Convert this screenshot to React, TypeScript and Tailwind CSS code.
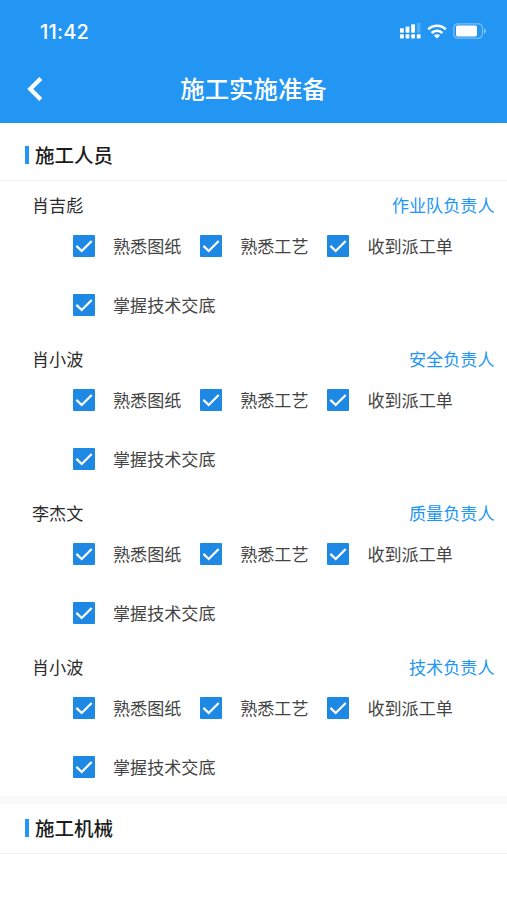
import { useState } from 'react'

type Worker = { name: string; role: string }

const WORKERS: Worker[] = [
  { name: '肖吉彪', role: '作业队负责人' },
  { name: '肖小波', role: '安全负责人' },
  { name: '李杰文', role: '质量负责人' },
  { name: '肖小波', role: '技术负责人' },
]

const CHECKS = ['熟悉图纸', '熟悉工艺', '收到派工单', '掌握技术交底']

function StatusBar() {
  return (
    <div className="flex h-[62px] items-center justify-between pl-10 pr-5">
      <span className="pt-px font-['Inter','Liberation_Sans',sans-serif] text-[20px] font-medium tracking-[0.2px]">11:42</span>
      <div className="flex items-center">
        {/* 双卡信号 */}
        <svg width="21" height="16" viewBox="0 0 21 16" fill="currentColor">
          <rect x="0" y="5.3" width="3.8" height="4.4" rx="0.8" />
          <rect x="5.6" y="3.6" width="3.8" height="6.1" rx="0.8" />
          <rect x="11.2" y="1.2" width="3.8" height="8.5" rx="0.8" />
          <rect x="16.8" y="0" width="3.8" height="9.7" rx="0.8" opacity="0.22" />
          <rect x="0" y="11.2" width="3.8" height="4.4" rx="0.8" />
          <rect x="5.6" y="11.2" width="3.8" height="4.4" rx="0.8" />
          <rect x="11.2" y="11.2" width="3.8" height="4.4" rx="0.8" />
          <rect x="16.8" y="11.2" width="3.8" height="4.4" rx="0.8" />
        </svg>
        <svg className="ml-[6px]" width="20" height="15" viewBox="0 0 20 15" fill="none" stroke="currentColor" strokeWidth="2.6">
          <path d="M1.2 5.4C6 0.5 14 0.5 18.8 5.4" />
          <path d="M4.6 9C7.6 6 12.4 6 15.4 9" />
          <path d="M10 14.4L6.9 11.4C8.6 9.9 11.4 9.9 13.1 11.4Z" fill="currentColor" stroke="none" />
        </svg>
        <svg className="ml-[6px]" width="34" height="16" viewBox="0 0 34 16">
          <rect x="0.8" y="0.8" width="28.6" height="14.4" rx="4" fill="none" stroke="currentColor" strokeWidth="1.2" opacity="0.4" />
          <rect x="3" y="2.6" width="21" height="10.8" rx="1.6" fill="currentColor" />
          <path d="M31 5.4C33.4 6.2 33.4 9.8 31 10.6Z" fill="currentColor" opacity="0.5" />
        </svg>
      </div>
    </div>
  )
}

function SectionTitle({ title }: { title: string }) {
  return (
    <div className="flex h-[50px] items-center border-b border-[#f2f2f2] bg-white pb-[2px] pl-[25px]">
      <span className="h-[18px] w-1 bg-[#2196f3]" />
      <h2 className="ml-[6px] text-[19.5px] font-medium leading-none text-[#1c1c1c]">{title}</h2>
    </div>
  )
}

function CheckItem({ label }: { label: string }) {
  const [checked, setChecked] = useState(true)
  return (
    <button type="button" role="checkbox" aria-checked={checked} onClick={() => setChecked(c => !c)}
      className="flex h-[59px] items-center gap-[18px] whitespace-nowrap">
      <span className={`flex size-[22px] shrink-0 items-center justify-center rounded-[1px] ${checked ? 'bg-[#1e88e5]' : 'border-2 border-gray-400'}`}>
        {checked && (
          <svg width="22" height="22" viewBox="0 0 22 22" fill="none" stroke="#fff" strokeWidth="2.3">
            <path d="M3.4 10.9L8.7 16L18.7 6" />
          </svg>
        )}
      </span>
      <span className="text-[17.1px] leading-none text-[#444]">{label}</span>
    </button>
  )
}

function WorkerBlock({ worker }: { worker: Worker }) {
  return (
    <div className="pb-px">
      <div className="flex h-[35px] items-center justify-between pl-8 pr-[12.5px] pt-[13px] text-[17.1px] leading-none">
        <span className="text-[#2b2b2b]">{worker.name}</span>
        <span className="text-[#2196f3]">{worker.role}</span>
      </div>
      <div className="grid grid-cols-[127.2px_127.2px_127px] pl-[73px]">
        {CHECKS.map(label => <CheckItem key={label} label={label} />)}
      </div>
    </div>
  )
}

export default function App() {
  return (
    <div className="flex h-[900px] w-full flex-col overflow-hidden bg-white font-['Noto_Sans_CJK_SC',sans-serif]">
      <header className="h-[123px] shrink-0 bg-[#2396f3] text-white">
        <StatusBar />
        <div className="grid h-[54px] grid-cols-[60px_1fr_60px] items-center">
          <button type="button" aria-label="返回" className="pl-[27px]">
            <svg width="16" height="24" viewBox="0 0 16 24" fill="none" stroke="currentColor" strokeWidth="4.2">
              <path d="M13.8 1.4L3.2 12L13.8 22.6" />
            </svg>
          </button>
          <h1 className="pb-[2px] text-center text-[24.4px] font-medium leading-none">施工实施准备</h1>
        </div>
      </header>

      <main className="flex-1">
        <div className="h-2 bg-[#fefefe]" />
        <SectionTitle title="施工人员" />
        <div className="h-[615px]">
          {WORKERS.map((w, i) => <WorkerBlock key={i} worker={w} />)}
        </div>
        <div className="h-2 bg-[#fafafa]" />
        <SectionTitle title="施工机械" />
      </main>
    </div>
  )
}
